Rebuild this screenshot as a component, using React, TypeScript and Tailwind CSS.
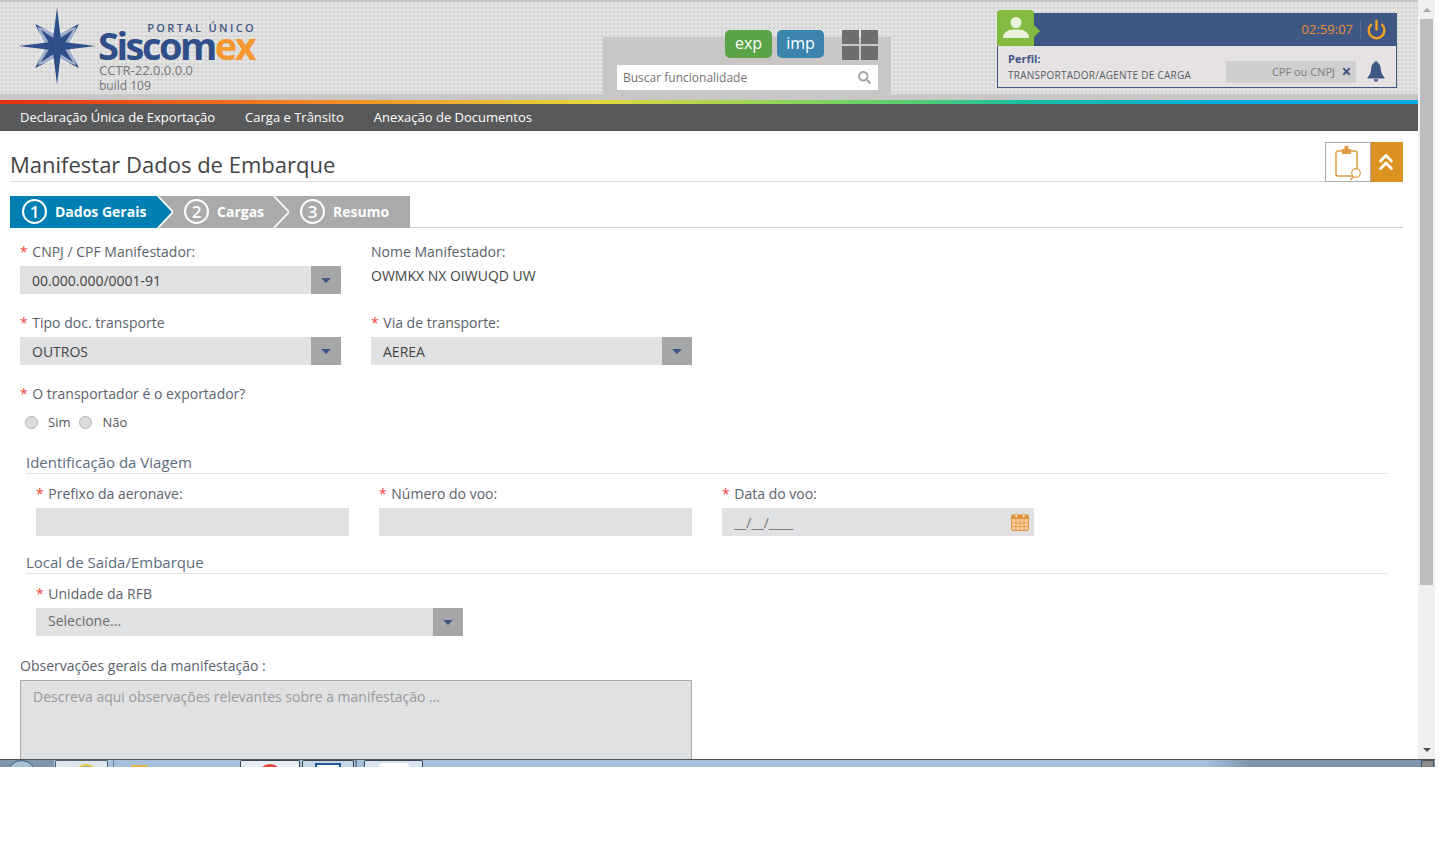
import React from "react";
import { ChevronsUp, Power } from "lucide-react";
import { FaSearch, FaTimes } from "react-icons/fa";

function starPoints(cx: number, cy: number, outer: number, inner: number, n: number, rot: number) {
  const pts: string[] = [];
  for (let i = 0; i < n * 2; i++) {
    const r = i % 2 === 0 ? outer : inner;
    const a = rot + (i * Math.PI) / n;
    pts.push(`${(cx + r * Math.sin(a)).toFixed(2)},${(cy - r * Math.cos(a)).toFixed(2)}`);
  }
  return pts.join(" ");
}

function Star() {
  const d = Math.PI / 4;
  return (
    <svg width="78" height="78" viewBox="0 0 78 78" className="shrink-0">
      <polygon points={starPoints(39, 39, 31, 11, 4, d)} fill="#2f4f8a" />
      <polygon points={starPoints(39, 39, 27, 14, 4, d)} fill="#ffffff" opacity="0.55" />
      <polygon points={starPoints(39, 39, 23, 6, 4, d)} fill="#2f4f8a" />
      <polygon points={starPoints(39, 39, 38.5, 6, 4, 0)} fill="#2f4f8a" />
    </svg>
  );
}

function Logo() {
  return (
    <div className="flex shrink-0 w-[241px]">
      <div className="mt-[5px]"><Star /></div>
      <div className="ml-[2px] w-[158px] flex flex-col">
        <div className="mt-[19px] h-[11px] text-right text-[11px] leading-[14px] tracking-[2.35px] text-[#3f5784] font-semibold whitespace-nowrap">PORTAL ÚNICO</div>
        <div className="h-[26px] text-[38px] leading-[26px] font-bold tracking-[-2.5px] text-[#2f4f8a] whitespace-nowrap">Siscom<span className="text-[#f7982e]">ex</span></div>
        <div className="mt-[5px] ml-[1px] h-[15px] text-[13px] leading-[15px] text-[#777] whitespace-nowrap">CCTR-22.0.0.0.0</div>
        <div className="ml-[1px] h-[15px] text-[12px] leading-[15px] text-[#777] whitespace-nowrap">build 109</div>
      </div>
    </div>
  );
}

function SearchPanel() {
  return (
    <div className="ml-[344px] mt-[35px] w-[288px] h-[57px] bg-[#c9c6c6] relative shrink-0">
      <div className="absolute -top-[7px] left-[122px] flex items-start">
        <div className="w-[47px] h-[28px] bg-[#5aa346] rounded-[5px] text-white text-[16px] leading-[27px] text-center">exp</div>
        <div className="ml-[5px] w-[47px] h-[28px] bg-[#3a84ae] rounded-[5px] text-white text-[16px] leading-[27px] text-center">imp</div>
        <div className="ml-[18px] w-[36px] grid grid-cols-2 gap-[2px]">
          <div className="h-[14px] bg-[#6d6e70]" />
          <div className="h-[14px] bg-[#6d6e70]" />
          <div className="h-[14px] bg-[#6d6e70]" />
          <div className="h-[14px] bg-[#6d6e70]" />
        </div>
      </div>
      <div className="absolute left-[14px] top-[28px] w-[261px] h-[25px] bg-white flex items-center justify-between pl-[6px] pr-[7px]">
        <span className="text-[12px] text-[#77716f]">Buscar funcionalidade</span>
        <FaSearch className="text-[#a6a8ab] text-[13px]" />
      </div>
    </div>
  );
}

function BellIcon() {
  return (
    <svg width="18" height="21" viewBox="0 0 18 21" className="shrink-0">
      <circle cx="9" cy="2" r="1.8" fill="#3f5784" />
      <path d="M9 1.5 C5.5 1.5 4.5 4.5 4.2 8 C3.9 11.5 3 13.5 0.5 16.5 L0.5 17.5 L17.5 17.5 L17.5 16.5 C15 13.5 14.1 11.5 13.8 8 C13.5 4.5 12.5 1.5 9 1.5 Z" fill="#3f5784" />
      <path d="M6.5 18.3 C7 20 8 20.7 9 20.7 C10 20.7 11 20 11.5 18.3 Z" fill="#3f5784" />
    </svg>
  );
}

function UserPanel() {
  return (
    <div className="ml-[106px] mt-[8px] w-[400px] h-[78px] relative shrink-0">
      <div className="mt-[3px] h-[33px] bg-[#3f5784] flex items-center justify-end pr-[10px]">
        <span className="text-[13px] text-[#ec8f35]">02:59:07</span>
        <div className="ml-[7px] w-px h-[18px] bg-[#5a6f96]" />
        <Power className="ml-[5px] text-[#f5a21f]" size={21} strokeWidth={2.7} />
      </div>
      <div className="h-[42px] bg-[#e6e2e3] border border-t-0 border-[#3f5784] flex items-center pl-[10px] pr-[10px]">
        <div className="w-[218px] flex flex-col">
          <span className="text-[11px] leading-[15px] font-bold text-[#3f5784]">Perfil:</span>
          <span className="mt-[2px] text-[10px] tracking-[0.25px] leading-[15px] text-[#555e66] whitespace-nowrap">TRANSPORTADOR/AGENTE DE CARGA</span>
        </div>
        <div className="w-[130px] h-[22px] bg-[#cfcfcf] mt-[10px] flex items-center justify-end pr-[4px]">
          <span className="mt-[1px] text-[11px] text-[#7d7d7d]">CPF ou CNPJ</span>
          <FaTimes className="ml-[6px] text-[#3f5784] text-[11px]" />
        </div>
        <div className="ml-[11px] mt-[10px]"><BellIcon /></div>
      </div>
      <div className="absolute left-0 top-0 w-[37px] h-[36px] bg-[#82bb40] rounded-tl-[4px] rounded-tr-[4px] flex items-center justify-center">
        <svg width="28" height="28" viewBox="0 0 28 28">
          <circle cx="14" cy="8.5" r="5.5" fill="#eaf1dc" />
          <path d="M1 24 C1 17 7 15.5 14 15.5 C21 15.5 27 17 27 24 Z" fill="#eaf1dc" />
        </svg>
        <div className="absolute right-[-6px] top-[15px] w-0 h-0 border-y-[6px] border-y-transparent border-l-[6px] border-l-[#82bb40]" />
      </div>
    </div>
  );
}

function Header() {
  return (
    <div>
      <div className="h-[2px] bg-[#c4c4c4]" />
      <div className="h-[92px] flex pl-[18px] bg-[#e2e2e2] bg-[radial-gradient(#cfcfcf_1px,transparent_1px)] bg-size-[4px_4px]">
        <Logo />
        <SearchPanel />
        <UserPanel />
      </div>
      <div className="h-[6px] bg-[#c9c6c6]" />
      <div className="h-[4px] bg-[linear-gradient(to_right,#e62e10_0%,#f58220_21%,#e4d83c_42%,#5fd06b_63%,#1bbfa0_72%,#00aee8_88%,#00aee8_100%)]" />
      <nav className="h-[27px] bg-[#58595b] flex items-center pl-[20px] gap-[30px] text-[13px] text-white">
        <span>Declaração Única de Exportação</span>
        <span>Carga e Trânsito</span>
        <span>Anexação de Documentos</span>
      </nav>
    </div>
  );
}

function Step({ n, label, active, w }: { n: number; label: string; active?: boolean; w: string }) {
  return (
    <div className={`${w} h-[32px] flex items-center ${active ? "bg-[#007fb3] pl-[12px]" : "bg-[#aaaaaa] pl-[11px]"}`}>
      <div className="-mt-[1px] w-[25px] h-[25px] rounded-full border-2 border-white flex items-center justify-center text-white text-[17px] leading-none font-semibold shrink-0">{n}</div>
      <span className="ml-[8px] -mt-[2px] text-white text-[14px] font-bold whitespace-nowrap">{label}</span>
    </div>
  );
}

function Chevron({ from }: { from: string }) {
  return (
    <svg width="16" height="32" viewBox="0 0 16 32" className="shrink-0">
      <rect width="16" height="32" fill="#aaaaaa" />
      <polygon points="0,0 15,16 0,32" fill={from} />
      <polyline points="0.5,-0.5 16,16 0.5,32.5" fill="none" stroke="#ffffff" strokeWidth="1.6" />
    </svg>
  );
}

function Label({ children, className = "" }: { children: React.ReactNode; className?: string }) {
  return (
    <div className={`h-[20px] text-[14px] leading-[20px] text-[#5a626c] whitespace-nowrap ${className}`}>
      <span className="text-[#f0453a] mr-[4.6px]">*</span>
      {children}
    </div>
  );
}

function Select({ value, w, muted }: { value: string; w: string; muted?: boolean }) {
  return (
    <div className={`${w} h-[28px] bg-[#e0e1e3] flex`}>
      <div className={`flex-1 pl-[12px] text-[14px] ${muted ? "leading-[25px] text-[#6b6b6b]" : "leading-[29px] text-[#444]"}`}>{value}</div>
      <div className="w-[30px] bg-[#a5a6a8] flex items-center justify-center">
        <div className="w-0 h-0 border-x-[5px] border-x-transparent border-t-[5px] border-t-[#3f5784]" />
      </div>
    </div>
  );
}

function Section({ children, className = "" }: { children: React.ReactNode; className?: string }) {
  return (
    <div className={`ml-[16px] mr-[16px] h-[22px] border-b border-[#e2e2e2] text-[15px] leading-[20px] text-[#5d6d80] ${className}`}>{children}</div>
  );
}

function Radio({ label }: { label: string }) {
  return (
    <div className="flex items-center">
      <div className="w-[13px] h-[13px] rounded-full bg-[#dcdcdc] border border-[#b0b0b0]" />
      <span className="ml-[10px] mt-[1px] text-[13px] text-[#555]">{label}</span>
    </div>
  );
}

function ClipboardIcon() {
  return (
    <svg width="28" height="36" viewBox="0 0 28 36" fill="none" className="mt-[1px]">
      <rect x="2" y="6" width="21" height="25" rx="2" stroke="#e29a45" strokeWidth="1.5" />
      <rect x="8" y="4" width="9" height="5" fill="#e29a45" />
      <rect x="10.5" y="1" width="4" height="4" fill="#e29a45" />
      <circle cx="22" cy="28" r="4.3" fill="#ffffff" stroke="#e29a45" strokeWidth="1.2" />
      <path d="M19.5 31.5 L16.5 35" stroke="#e29a45" strokeWidth="1.5" />
    </svg>
  );
}

function CalendarIcon() {
  return (
    <svg width="18" height="18" viewBox="0 0 18 18">
      <rect x="0.5" y="2" width="17" height="15.5" rx="1.5" fill="#f3cfa0" stroke="#e2943a" />
      <rect x="0.5" y="2" width="17" height="4" fill="#e2943a" />
      <rect x="4" y="0.5" width="2.4" height="4" rx="1" fill="#f6e3c8" stroke="#e2943a" strokeWidth="0.6" />
      <rect x="11.6" y="0.5" width="2.4" height="4" rx="1" fill="#f6e3c8" stroke="#e2943a" strokeWidth="0.6" />
      <path d="M1 10h16M1 13.5h16M5 6v11M9 6v11M13 6v11" stroke="#e2943a" strokeWidth="0.8" />
    </svg>
  );
}

function Content() {
  return (
    <div className="pl-[10px] pr-[15px]">
      <div className="mt-[11px] flex">
        <div className="flex-1 h-[40px] border-b border-[#dedede] text-[22px] leading-[30px] pt-[7px] text-[#444]">Manifestar Dados de Embarque</div>
        <div className="w-[46px] h-[40px] border border-[#aaaaaa] bg-white flex items-center justify-center"><ClipboardIcon /></div>
        <div className="w-[32px] h-[40px] bg-[#dc9220] flex items-center justify-center pr-[2px]"><ChevronsUp className="text-white" size={26} strokeWidth={2.6} /></div>
      </div>

      <div className="mt-[14px] h-[32px] flex border-b border-[#c9c9c9]">
        <Step n={1} label="Dados Gerais" active w="w-[147px]" />
        <Chevron from="#007fb3" />
        <Step n={2} label="Cargas" w="w-[100px]" />
        <Chevron from="#aaaaaa" />
        <Step n={3} label="Resumo" w="w-[121px]" />
      </div>

      <div className="pl-[10px]">
        <div className="mt-[14px] flex gap-[30px]">
          <div className="w-[321px]">
            <Label className="mb-[4px]">CNPJ / CPF Manifestador:</Label>
            <Select value="00.000.000/0001-91" w="w-[321px]" />
          </div>
          <div>
            <div className="h-[20px] text-[14px] leading-[20px] text-[#5a626c]">Nome Manifestador:</div>
            <div className="mt-[4px] text-[14px] leading-[20px] text-[#444]">OWMKX NX OIWUQD UW</div>
          </div>
        </div>
        <div className="mt-[19px] flex gap-[30px]">
          <div>
            <Label className="mb-[4px]">Tipo doc. transporte</Label>
            <Select value="OUTROS" w="w-[321px]" />
          </div>
          <div>
            <Label className="mb-[4px]">Via de transporte:</Label>
            <Select value="AEREA" w="w-[321px]" />
          </div>
        </div>
        <Label className="mt-[19px]">O transportador é o exportador?</Label>
        <div className="mt-[8px] h-[20px] ml-[5px] flex items-center gap-[8px]">
          <Radio label="Sim" />
          <div className="ml-[1px]"><Radio label="Não" /></div>
        </div>
      </div>

      <Section className="mt-[20px]">Identificação da Viagem</Section>
      <div className="mt-[10px] ml-[26px] flex gap-[30px]">
        <div>
          <Label className="mb-[4px]">Prefixo da aeronave:</Label>
          <div className="w-[313px] h-[28px] bg-[#e0e1e3]" />
        </div>
        <div>
          <Label className="mb-[4px]">Número do voo:</Label>
          <div className="w-[313px] h-[28px] bg-[#e0e1e3]" />
        </div>
        <div>
          <Label className="mb-[4px]">Data do voo:</Label>
          <div className="w-[312px] h-[28px] bg-[#e0e1e3] flex items-center justify-between pl-[12px] pr-[5px] text-[14px] text-[#777]">
            <span>__/__/____</span>
            <CalendarIcon />
          </div>
        </div>
      </div>

      <Section className="mt-[16px]">Local de Saída/Embarque</Section>
      <div className="mt-[10px] ml-[26px]">
        <Label className="mb-[4px]">Unidade da RFB</Label>
        <Select value="Selecione..." w="w-[427px]" muted />
      </div>

      <div className="pl-[10px]">
        <div className="mt-[20px] h-[20px] text-[14px] leading-[20px] text-[#5a626c]">Observações gerais da manifestação :</div>
        <div className="mt-[4px] w-[672px] h-[100px] bg-[#e0e1e3] border border-[#a9a9a9] pl-[12px] pt-[6px] text-[14px] leading-[20px] text-[#9a9a9a]">Descreva aqui observações relevantes sobre a manifestação ...</div>
      </div>
    </div>
  );
}

function Scrollbar() {
  return (
    <div className="w-[17px] bg-[#f0f0f0] flex flex-col items-center shrink-0">
      <div className="h-[19px] flex items-center justify-center">
        <div className="w-0 h-0 border-x-[4px] border-x-transparent border-b-[4px] border-b-[#a6a6a6]" />
      </div>
      <div className="w-[13px] h-[566px] bg-[#bdbdbd]" />
      <div className="flex-1" />
      <div className="h-[18px] flex items-center justify-center">
        <div className="w-0 h-0 border-x-[4px] border-x-transparent border-t-[4px] border-t-[#505050]" />
      </div>
    </div>
  );
}

function Taskbar() {
  return (
    <div className="h-[8px] border-t border-[#4a5560] flex overflow-hidden bg-[linear-gradient(to_right,#a7c0dc_0%,#a7c0dc_84%,#8096ae_87%,#8096ae_100%)]">
      <div className="w-[54px] bg-[#8096ae] pl-[7px]">
        <div className="w-[29px] h-[29px] rounded-full border border-[#3b5d7c] bg-[#a8c0d4]" />
      </div>
      <div className="ml-[1px] w-[53px] bg-[#dce6f0] border-x border-t border-[#54606c] rounded-t-[2px] pl-[19px]">
        <div className="mt-[3px] w-[22px] h-[22px] rounded-full border-2 border-[#f0c830] bg-[#7fb4e0]" />
      </div>
      <div className="ml-[5px] w-[127px] border-l border-[#6f8296] pl-[17px]">
        <div className="mt-[5px] w-[17px] h-[3px] bg-[#e8b04a]" />
      </div>
      <div className="w-[60px] bg-[#e6edf4] border-x border-t border-[#3b4650] rounded-t-[2px] pl-[17px]">
        <div className="mt-[3px] w-[24px] h-[24px] rounded-full bg-[#e0463a]" />
      </div>
      <div className="ml-[2px] w-[52px] bg-[#c6d6e6] border-x border-t border-[#3b4650] rounded-t-[2px] pl-[12px]">
        <div className="mt-[2px] w-[26px] h-[8px] border-2 border-[#1e5a96] bg-white" />
      </div>
      <div className="ml-[1px] w-[2px] border-x border-[#6f8296]" />
      <div className="ml-[7px] w-[59px] bg-[#d8e4ef] border-x border-t border-[#3b4650] rounded-t-[2px] pl-[14px]">
        <div className="mt-[2px] w-[30px] h-[8px] rounded-t-[4px] bg-white" />
      </div>
      <div className="flex-1" />
      <div className="w-[13px] h-[8px] mr-[1px] border border-[#4a5560] bg-[#8c8c8c]" />
    </div>
  );
}

export default function App() {
  return (
    <div className="w-[1440px] h-[868px] bg-white overflow-hidden font-['Open_Sans',sans-serif]">
      <div className="w-[1435px] h-[767px] flex flex-col">
        <div className="h-[759px] flex overflow-hidden">
          <div className="w-[1418px] overflow-hidden">
            <Header />
            <Content />
          </div>
          <Scrollbar />
        </div>
        <Taskbar />
      </div>
    </div>
  );
}
